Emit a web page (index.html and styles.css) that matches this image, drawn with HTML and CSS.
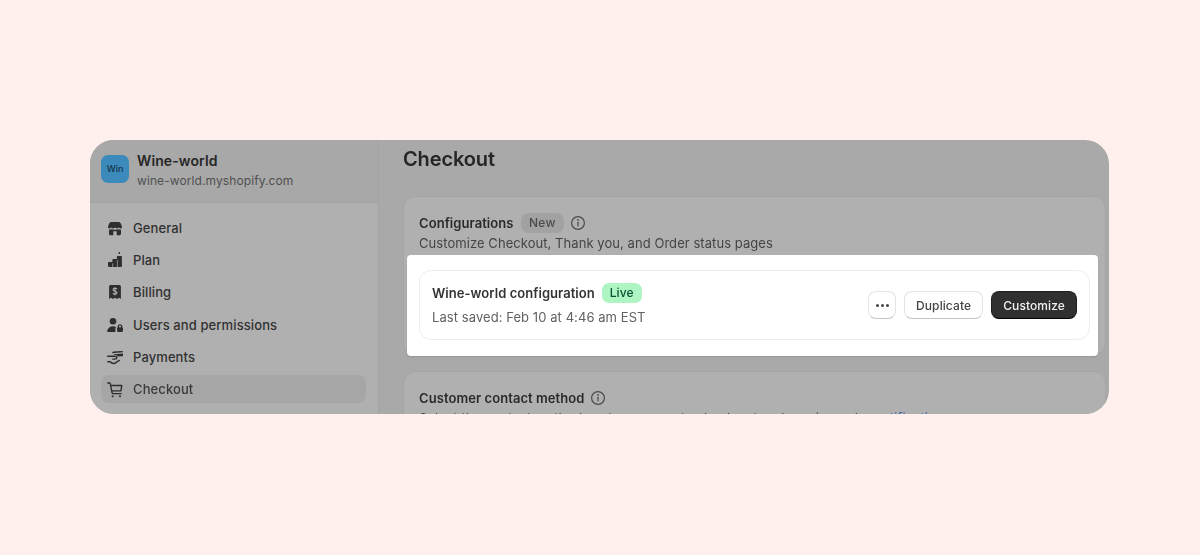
FILE: index.html
```html
<!DOCTYPE html>
<html lang="en">
<head>
<meta charset="utf-8">
<title>Checkout settings</title>
<link rel="stylesheet" href="styles.css">
</head>
<body>
<div class="window">
  <aside class="sidebar">
    <div class="store">
      <div class="avatar">Win</div>
      <div class="store-text">
        <div class="store-name">Wine-world</div>
        <div class="store-url">wine-world.myshopify.com</div>
      </div>
    </div>
    <nav class="nav">
      <a class="nav-item">
        <svg class="nav-icon" viewBox="0 0 20 20"><path d="M6.500 4h7c1 0 1.900.6 2.300 1.500l1.100 3c.3 1-.4 2-1.400 2-.8 0-1.500-.5-1.700-1.200-.3.700-1 1.200-1.900 1.200s-1.500-.5-1.900-1.200c-.4.700-1 1.200-1.900 1.200s-1.600-.5-1.900-1.200c-.2.700-.9 1.200-1.700 1.200-1 0-1.700-1-1.400-2l1.100-3C4.600 4.600 5.500 4 6.500 4z"/><path fill-rule="evenodd" d="M4 11.500c1 .3 2 .1 2.800-.5.9.6 1.800.8 3.200.8s2.300-.2 3.200-.8c.8.600 1.800.8 2.800.5v4.200c0 .9-.7 1.500-1.500 1.500h-9c-.8 0-1.500-.6-1.500-1.500zm4.300 1.700v4h3.400v-4z"/></svg>
        <span>General</span>
      </a>
      <a class="nav-item">
        <svg class="nav-icon" viewBox="0 0 20 20"><circle cx="14.300" cy="3" r=".9"/><path d="M3.800 12h3.600V9.600c0-.4.300-.7.700-.7h3.800V6.800c0-.4.300-.7.700-.7h3.600c.4 0 .7.300.7.700v9.400c0 .4-.3.700-.7.700H3.800c-.5 0-.8-.3-.8-.8v-3.300c0-.5.300-.8.800-.8z"/><path class="cut" d="M7.700 13.400v3.600M12.400 10v7"/></svg>
        <span>Plan</span>
      </a>
      <a class="nav-item">
        <svg class="nav-icon" viewBox="0 0 20 20"><path d="M5.700 3h8.600c.9 0 1.600.7 1.600 1.600v12.400l-1.900-1.200-2 1.200-2-1.200-2 1.200-2-1.200-1.900 1.200V4.600C4.100 3.700 4.800 3 5.700 3z"/><path class="cut thin" d="M12 7.300c-.3-.7-1-1.100-2-1.100-1.100 0-2 .6-2 1.500 0 2.100 4.100 1 4.100 3.100 0 .9-.9 1.500-2.100 1.500-1 0-1.800-.4-2.100-1.100M10 5v8.300"/></svg>
        <span>Billing</span>
      </a>
      <a class="nav-item">
        <svg class="nav-icon" viewBox="0 0 20 20"><circle cx="8" cy="6.300" r="3.300"/><path d="M2.800 17c-.5 0-.8-.4-.7-.8.5-3 2.700-5 5.900-5 1.200 0 2.300.3 3.100.8-.4.500-.7 1.100-.7 1.800V17z"/><path fill-rule="evenodd" d="M12.600 12.500v-.9c0-1.400 1-2.400 2.400-2.400s2.400 1 2.400 2.400v.9c.4.200.6.600.6 1v2.300c0 .7-.5 1.200-1.200 1.200h-3.600c-.7 0-1.200-.5-1.200-1.200v-2.300c0-.4.200-.8.600-1zm1.400-.2h2v-.7c0-.6-.4-1-1-1s-1 .4-1 1z"/></svg>
        <span>Users and permissions</span>
      </a>
      <a class="nav-item">
        <svg class="nav-icon" viewBox="0 0 20 20"><path d="M8.300 4.500 17.200 4c.5 0 .8.300.8.700v.6L7 6.200c.2-.8.700-1.600 1.300-1.700z"/><path d="M9 7.300 18 6.600v1.900c0 .4-.3.700-.7.700l-4.400.4C12.400 8.700 11.300 8.100 10 8.100H8.500z"/><path class="line" d="M2.600 9.300h7.200c1.200 0 2 .6 2 1.500s-.7 1.300-1.700 1.300H7.700M2.800 14.700h2.400c1.200 1.500 2.800 2 4.400 1.600l4.700-2.900"/></svg>
        <span>Payments</span>
      </a>
      <a class="nav-item active">
        <svg class="nav-icon" viewBox="0 0 20 20"><path class="line" d="M2.800 4h1.500c.5 0 .9.300 1 .8l1.800 9c.1.500.5.800 1 .8h8M5.600 6.500h11.200l-.9 5.400H6.600"/><circle cx="7.600" cy="17.300" r="1"/><circle cx="15" cy="17.300" r="1"/></svg>
        <span>Checkout</span>
      </a>
    </nav>
  </aside>

  <main class="main">
    <h1 class="page-title">Checkout</h1>

    <section class="card config-card">
      <div class="card-head">
        <div class="card-title-row">
          <span class="card-title">Configurations</span>
          <span class="badge">New</span>
          <svg class="info" viewBox="0 0 16 16"><circle cx="8" cy="8" r="6.400"/><path d="M8 7.300v3.700"/><circle class="dot" cx="8" cy="4.900" r=".9"/></svg>
        </div>
        <p class="card-desc">Customize Checkout, Thank you, and Order status pages</p>
      </div>
      <div class="spotlight">
        <div class="config-row">
          <div class="config-info">
            <div class="config-title-row">
              <span class="config-name">Wine-world configuration</span>
              <span class="badge-live">Live</span>
            </div>
            <div class="config-saved">Last saved: Feb 10 at 4:46 am EST</div>
          </div>
          <div class="actions">
            <button class="btn btn-icon" aria-label="More actions"><i></i><i></i><i></i></button>
            <button class="btn">Duplicate</button>
            <button class="btn btn-primary">Customize</button>
          </div>
        </div>
      </div>
    </section>

    <section class="card contact-card">
      <div class="card-title-row">
        <span class="card-title">Customer contact method</span>
        <svg class="info" viewBox="0 0 16 16"><circle cx="8" cy="8" r="6.400"/><path d="M8 7.300v3.700"/><circle class="dot" cx="8" cy="4.900" r=".9"/></svg>
      </div>
      <p class="card-desc">Select the contact method customers use to check out and receive order <a class="link">notifications</a></p>
    </section>
  </main>
</div>
</body>
</html>
```
FILE: styles.css
```css
* { box-sizing: border-box; }

html, body { height: 100%; }

body {
  margin: 0;
  background: #fff0ed;
  font-family: Inter, "Liberation Sans", sans-serif;
  color: #2a2a2a;
  padding: 140px 91px 0 90px;
}

.window {
  display: flex;
  height: 274px;
  border-radius: 24px;
  overflow: hidden;
  background: #a9a9a9;
  filter: blur(0.35px);
}

/* Sidebar */
.sidebar {
  flex: 0 0 289px;
  background: #b0b0b0;
  border-right: 1px solid #a2a2a2;
}

.store {
  display: flex;
  align-items: center;
  gap: 8px;
  height: 63px;
  padding: 0 11px 5px;
  background: #a8a8a8;
  border-bottom: 1px solid #a3a3a3;
}

.avatar {
  width: 28px;
  height: 28px;
  border-radius: 7px;
  background: #3b8abb;
  color: #16344a;
  font-size: 9px;
  font-weight: 500;
  display: flex;
  align-items: center;
  justify-content: center;
}

.store-text { margin-top: 5px; }

.store-name {
  font-size: 14px;
  font-weight: 600;
  line-height: 20px;
  letter-spacing: .1px;
  color: #262626;
}

.store-url {
  font-size: 12px;
  line-height: 20px;
  letter-spacing: .09px;
  color: #505050;
}

.nav {
  display: flex;
  flex-direction: column;
  gap: 4.2px;
  padding: 11px 12px 0 11px;
}

.nav-item {
  display: flex;
  align-items: center;
  gap: 8px;
  height: 28px;
  padding: 0 8px 0 4px;
  border-radius: 8px;
  font-size: 13px;
  font-weight: 500;
  letter-spacing: .1px;
  color: #303030;
}

.nav-item.active {
  background: #a6a6a6;
  color: #3a3a3a;
}

.nav-icon {
  width: 20px;
  height: 20px;
  fill: #2e2e2e;
  flex: none;
}

.nav-icon .cut {
  fill: none;
  stroke: #b0b0b0;
  stroke-width: .7;
}

.nav-icon .cut.thin { stroke-width: 1.100; }

.nav-icon .line {
  fill: none;
  stroke: #2e2e2e;
  stroke-width: 1.400;
  stroke-linecap: round;
  stroke-linejoin: round;
}

/* Main */
.main {
  flex: 1;
  padding: 0 3px 0 24px;
  min-width: 0;
}

.page-title {
  margin: 0;
  height: 56px;
  padding-top: 6px;
  font-size: 20px;
  line-height: 26px;
  font-weight: 600;
  letter-spacing: -.12px;
  color: #262626;
}

.card {
  background: #b0b0b0;
  border: 1px solid #a4a4a4;
  border-radius: 12px;
}

.config-card {
  height: 159px;
  padding: 15px 0 0;
}

.card-head { padding: 0 15px; }

.card-title-row {
  display: flex;
  align-items: center;
  height: 21px;
  gap: 7px;
}

.card-title {
  font-size: 13px;
  font-weight: 600;
  letter-spacing: .07px;
  color: #2a2a2a;
}

.badge {
  background: #a2a2a2;
  color: #4a4a4a;
  font-size: 12px;
  font-weight: 500;
  line-height: 20px;
  letter-spacing: .2px;
  padding: 0 8.5px;
  border-radius: 8px;
}

.info {
  width: 16px;
  height: 16px;
  fill: none;
  stroke: #4a4a4a;
  stroke-width: 1.200;
  stroke-linecap: round;
  margin-left: -1px;
}

.info .dot { fill: #4a4a4a; stroke: none; }

.card-desc {
  margin: 0;
  font-size: 13px;
  line-height: 20px;
  letter-spacing: .06px;
  color: #444;
  white-space: nowrap;
}

.spotlight {
  margin: 2px 7px 0 3px;
  height: 101px;
  padding: 15px 8px 15px 12px;
  background: #fff;
  border-radius: 4px;
  box-shadow: 0 1px 2px rgba(0, 0, 0, .12);
}

.config-row {
  display: flex;
  align-items: center;
  justify-content: space-between;
  height: 70px;
  padding: 0 12px;
  border: 1px solid #ededed;
  border-radius: 12px;
}

.config-title-row {
  display: flex;
  align-items: center;
  gap: 7px;
  height: 20px;
}

.config-name {
  font-size: 13px;
  font-weight: 600;
  letter-spacing: .05px;
  color: #333;
}

.badge-live {
  background: #aff5c3;
  color: #0c5132;
  font-size: 12px;
  font-weight: 500;
  line-height: 20px;
  letter-spacing: .05px;
  padding: 0 8px;
  border-radius: 7px;
}

.config-saved {
  margin-top: 4px;
  font-size: 13px;
  line-height: 20px;
  letter-spacing: .07px;
  color: #616161;
}

.actions {
  display: flex;
  align-items: center;
  gap: 8px;
}

.btn {
  height: 28px;
  padding: 0 11px;
  background: #fff;
  border: 1px solid #e3e3e3;
  border-bottom-color: #c4c4c4;
  border-radius: 8px;
  font-family: inherit;
  font-size: 12px;
  font-weight: 500;
  letter-spacing: .1px;
  color: #444;
}

.btn-icon {
  width: 28px;
  padding: 0;
  display: flex;
  align-items: center;
  justify-content: center;
  gap: 2px;
}

.btn-icon i {
  width: 3px;
  height: 3px;
  border-radius: 50%;
  background: #444;
}

.btn-primary {
  background: #303030;
  border-color: #1f1f1f;
  border-bottom-color: #000;
  color: #f0f0f0;
}

.contact-card {
  margin-top: 16px;
  height: 80px;
  padding: 15px;
}

.contact-card .card-title-row { gap: 5px; }

.contact-card .info { margin-left: 0; }

.contact-card .card-desc { margin-top: 0; }

.link { color: #2a5fa8; }
```
